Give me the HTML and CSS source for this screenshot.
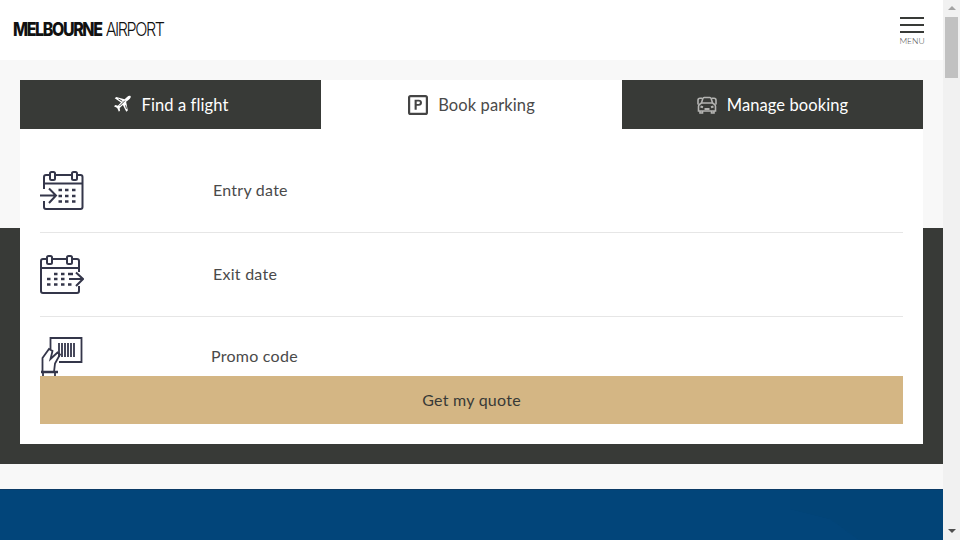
FILE: index.html
```html
<!DOCTYPE html>
<html lang="en">
<head>
<meta charset="utf-8">
<title>Melbourne Airport</title>
<link rel="stylesheet" href="styles.css">
</head>
<body>
<div class="window">
  <main class="page">
    <header class="site-header">
      <a class="logo"><span class="logo-bold">MELBOURNE</span> <span class="logo-light">AIRPORT</span></a>
      <button class="menu-btn">
        <span class="menu-bars"><i></i><i></i><i></i></span>
        <span class="menu-label">MENU</span>
      </button>
    </header>
    <section class="booking">
      <div class="card">
        <nav class="tabs">
          <a class="tab">
            <svg class="tab-icon" width="19" height="19" viewBox="0 0 20 20"><path fill="#fff" d="M18.600 1.200c-1-.7-2.600-.2-3.800.8l-2.600 2.400L3.400 2 1.800 3.400l6.600 4.400-3.300 3.400-2.500-.6L1 11.800l3.400 2 1.800 3.800 1.200-1.400-.4-2.600 3.400-3 3.600 7 1.600-1.400-1.800-9.200L16.600 5c1.200-1.200 2.600-2.800 2-3.800z"/><path fill="none" stroke="#383a37" stroke-width="1" d="M12.500 6l-5.500 5.500M5.800 4.200l4 2.400M13.200 11l1 3.500"/></svg>
            Find a flight
          </a>
          <a class="tab tab-active">
            <svg class="tab-icon" width="20" height="20" viewBox="0 0 20 20"><rect x="1.100" y="1.100" width="17.800" height="17.800" rx="1.500" fill="none" stroke="#444" stroke-width="2.200"/><path fill="#444" fill-rule="evenodd" d="M6.600 4.800h4.200c2 0 3.200 1.100 3.200 2.900s-1.200 3-3.200 3H8.700v4H6.600zm2.100 1.800v2.400h1.900c.9 0 1.300-.5 1.300-1.200s-.4-1.200-1.300-1.200z"/></svg>
            Book parking
          </a>
          <a class="tab">
            <svg class="tab-icon" width="20" height="18" viewBox="0 0 20 18" fill="none" stroke="#b4b4b2" stroke-width="1.600"><path d="M1 8.500V4.200C1 3 2 2.200 3 2.200h2M15 2.200h2c1 0 2 .8 2 2v4.300"/><path d="M4.500 7l1.300-4.500c.2-.6.700-1 1.300-1h5.800c.6 0 1.100.4 1.300 1L15.500 7"/><path d="M3 8l1.500-1h11L17 8c1 .6 1.500 1.500 1.500 2.500V15h-17v-4.500C1.500 9.500 2 8.600 3 8z"/><path d="M3 15v2h2.500v-2M14.500 15v2H17v-2"/><path stroke-width="2" d="M3.500 10.500l2.500.8M16.500 10.500l-2.500.8M7.500 13h5"/></svg>
            Manage booking
          </a>
        </nav>
        <form class="form">
          <div class="field">
            <svg class="field-icon" width="44" height="40" viewBox="0 0 44 40" fill="none" stroke="#34364a" stroke-width="2"><path d="M4 18V6c0-1 .8-2 2-2h4M15 4h17M37 4h3.500c1 0 2 1 2 2v30c0 1-1 2-2 2H6c-1.200 0-2-1-2-2v-6"/><rect x="10" y="1" width="5" height="8" rx="1.500"/><rect x="32" y="1" width="5" height="8" rx="1.500"/><path d="M4 12.500h38.500"/><path d="M0 24.500h15.500M9 17.500l7 7-7 7.500"/><path stroke-width="2.500" d="M18.500 19h3.500M25 19h3.500M32 19h3.500M18.500 25h3.500M25 25h3.500M32 25h3.500M18.500 30.500h3.500M25 30.500h3.500M32 30.500h3.500"/></svg>
            <label class="field-label">Entry date</label>
          </div>
          <div class="field">
            <svg class="field-icon" width="44" height="40" viewBox="0 0 44 40" fill="none" stroke="#34364a" stroke-width="2"><path d="M39 17V6c0-1-1-2-2-2h-5M27 4H12M7 4H3C2 4 1 5 1 6v30c0 1 1 2 2 2h34c1 0 2-1 2-2v-5"/><rect x="7" y="1" width="5" height="8" rx="1.500"/><rect x="27" y="1" width="5" height="8" rx="1.500"/><path d="M1 13h38"/><path d="M29 24h14M36 17.500l7 6.500-7 7"/><path stroke-width="2.500" d="M14 19h3.500M21 19h3.500M28 19h5M7 24h3.500M14 24h3.500M21 24h3.500M7 29.500h3.500M14 29.500h3.500M21 29.500h3.500M28 29.500h3.500"/></svg>
            <label class="field-label">Exit date</label>
          </div>
          <div class="field field-promo">
            <svg class="field-icon" width="44" height="40" viewBox="0 0 44 40" fill="none" stroke="#34364a" stroke-width="1.800"><path d="M10.500 12V1h31v24H19"/><path stroke-width="1.800" d="M19 6v14M22 6v14M25 6v14M28 6v14M31 6v14M34 6v14"/><path d="M2.500 35V21L9 12l3.500 2-2 8 7-6.500 2.500 2-5 9-1 8.500"/><path stroke-width="2.500" d="M1 35h17"/><path d="M3 35v5M15 35v5"/></svg>
            <label class="field-label">Promo code</label>
          </div>
          <button class="submit" type="button">Get my quote</button>
        </form>
      </div>
    </section>
    <div class="gap"></div>
    <section class="hero">
      <svg class="hero-texture" width="943" height="51" viewBox="0 0 943 51"><path fill="#03426f" fill-opacity=".2" d="M790 0h153v51H860l-30-22-40-10z"/></svg>
    </section>
  </main>
  <aside class="scrollbar">
    <span class="arrow arrow-up"></span>
    <span class="thumb"></span>
    <span class="track"></span>
    <span class="arrow arrow-down"></span>
  </aside>
</div>
</body>
</html>
```
FILE: styles.css
```css
* { box-sizing: border-box; }
html, body { margin: 0; height: 100%; overflow: hidden; }
body { font-family: Lato, "Open Sans", sans-serif; color: #383a37; background: #fff; }
.window { display: flex; height: 540px; width: 960px; }
.page { width: 943px; height: 540px; overflow: hidden; display: flex; flex-direction: column; flex: none; }

.site-header { height: 60px; flex: none; background: #fff; display: flex; align-items: flex-start; justify-content: space-between; padding: 0 19px 0 13px; }
.logo { font-family: Inter, Lato, sans-serif; font-size: 16px; line-height: 20px; margin-top: 19px; color: #111; white-space: nowrap; letter-spacing: -1.400px; transform: scaleY(1.180); }
.logo-bold { font-weight: 800; }
.logo-light { font-weight: 300; margin-left: 1px; }
.menu-btn { width: 24px; padding: 0; margin: 17px 0 0; border: 0; background: none; display: flex; flex-direction: column; align-items: center; }
.menu-bars { width: 24px; height: 16px; display: flex; flex-direction: column; justify-content: space-between; }
.menu-bars i { display: block; height: 2px; background: #383a37; }
.menu-label { font-family: Lato, sans-serif; font-size: 8.500px; font-weight: 300; line-height: 10px; margin-top: 3px; color: #444; }

.booking { flex: none; height: 404px; padding: 20px; background: linear-gradient(#f8f8f8 168px, #383a37 168px); }
.card { width: 903px; height: 364px; background: #fff; display: flex; flex-direction: column; }
.tabs { display: grid; grid-template-columns: repeat(3, 301px); height: 49px; flex: none; }
.tab { display: flex; align-items: center; justify-content: center; gap: 10px; background: #383a37; color: #fff; font-size: 16.500px; letter-spacing: .1px; }
.tab-active { background: #fff; color: #4a4a4a; }
.tab-icon { flex: none; }

.form { padding: 20px; display: flex; flex-direction: column; flex: 1; }
.field { height: 84px; border-bottom: 1px solid #e6e6e6; display: flex; align-items: center; flex: none; padding-bottom: 1px; }
.field-icon { flex: none; margin-top: 1px; }
.field-label { margin: 0 0 0 129px; font-size: 16px; line-height: 20px; letter-spacing: .25px; color: #4a4a4a; }
.field-promo { height: 59px; border: 0; align-items: flex-start; padding-top: 20px; overflow: hidden; }
.field-promo .field-icon { margin-top: 0; }
.field-promo .field-label { margin: 9px 0 0 127px; }
.submit { height: 48px; flex: none; border: 0; background: #d4b684; font: 16px/20px Lato, sans-serif; letter-spacing: .25px; color: #383a37; padding: 0 0 1px; width: 863px; }

.gap { height: 25px; flex: none; background: #f8f8f8; }
.hero { flex: 1; background: #02457a; border-top: 1px solid #0b3a66; overflow: hidden; }
.hero-texture { display: block; }

.scrollbar { width: 17px; height: 540px; background: #f1f1f1; display: flex; flex-direction: column; align-items: center; flex: none; }
.arrow { width: 17px; height: 17px; flex: none; display: flex; }
.arrow-up::before { content: ""; margin: 6px auto 0; border: 4px solid transparent; border-top: 0; border-bottom: 4px solid #a3a3a3; height: 0; }
.arrow-down::before { content: ""; margin: 6px auto 0; border: 4px solid transparent; border-bottom: 0; border-top: 4px solid #505050; height: 0; }
.thumb { width: 13px; height: 61px; background: #c1c1c1; flex: none; }
.track { flex: 1; }
```
